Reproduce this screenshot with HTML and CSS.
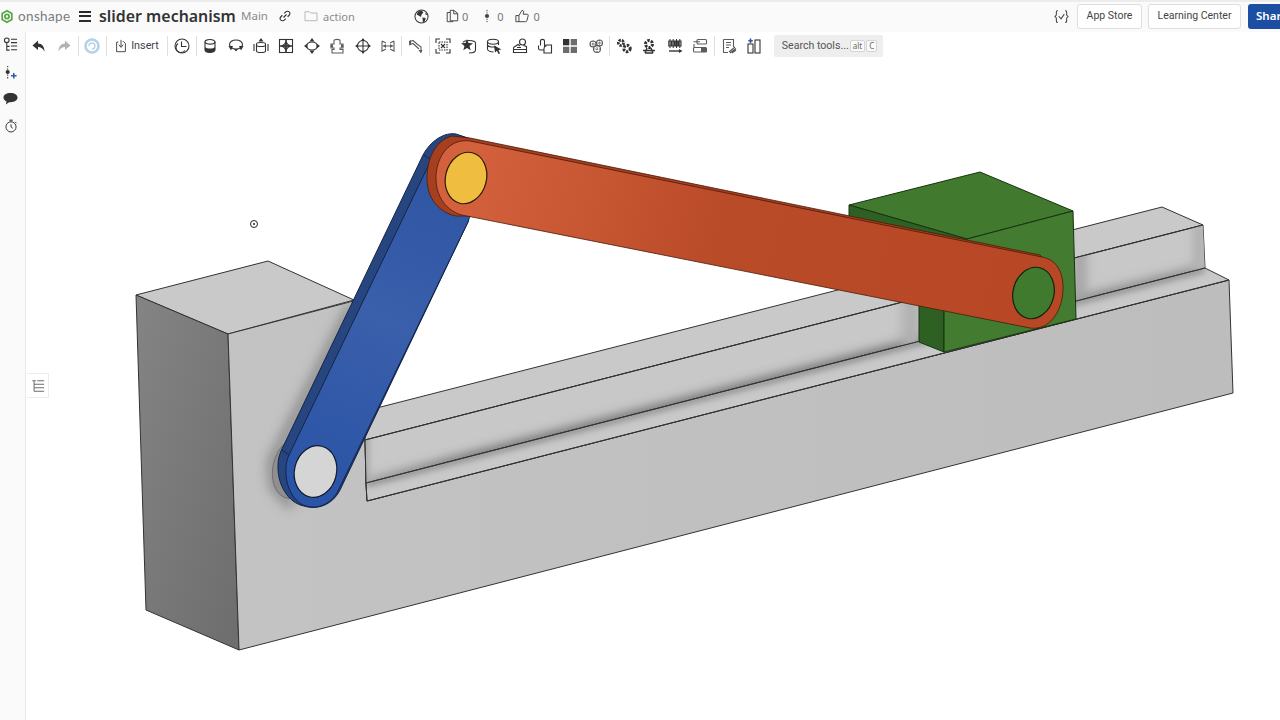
FILE: index.html
```html
<!DOCTYPE html>
<html lang="en">
<head>
<meta charset="utf-8">
<title>slider mechanism</title>
<link rel="stylesheet" href="styles.css">
</head>
<body>
<div class="app">
<svg class="scene" viewBox="0 0 1280 720" width="1280" height="720" aria-hidden="true">
  <defs>
    <linearGradient id="gLeft" x1="0" y1="0" x2="1" y2="1"><stop offset="0" stop-color="#848484"/><stop offset="1" stop-color="#6d6d6d"/></linearGradient>
    <linearGradient id="gFront" x1="0" y1="0" x2="1" y2="0"><stop offset="0" stop-color="#c3c3c3"/><stop offset="1" stop-color="#bdbdbd"/></linearGradient>
    <linearGradient id="gOrange" gradientUnits="userSpaceOnUse" x1="470" y1="150" x2="1040" y2="300"><stop offset="0" stop-color="#d4613d"/><stop offset=".45" stop-color="#ba4b28"/><stop offset="1" stop-color="#b84825"/></linearGradient>
    <linearGradient id="gBlue" gradientUnits="userSpaceOnUse" x1="440" y1="180" x2="310" y2="490"><stop offset="0" stop-color="#2f56a4"/><stop offset=".45" stop-color="#3a5fab"/><stop offset="1" stop-color="#2a54a6"/></linearGradient>
    <linearGradient id="gRailShade" gradientUnits="userSpaceOnUse" x1="366" y1="0" x2="1205" y2="0"><stop offset="0" stop-color="#888"/><stop offset=".12" stop-color="#4c4c4c"/><stop offset=".6" stop-color="#4c4c4c"/><stop offset="1" stop-color="#777"/></linearGradient>
    <filter id="blur6" filterUnits="userSpaceOnUse" x="0" y="0" width="1280" height="720"><feGaussianBlur stdDeviation="6"/></filter>
    <filter id="blur4" filterUnits="userSpaceOnUse" x="0" y="0" width="1280" height="720"><feGaussianBlur stdDeviation="3.500"/></filter>
    <clipPath id="cFront"><polygon points="228,334 365,298 365,440 366,483 367,501 1229,280 1233,393 239,650"/></clipPath>
    <clipPath id="cRailFront"><polygon points="365,440 1203,225 1205,268 366,483"/></clipPath>
    <clipPath id="cLedge"><polygon points="366,483 1205,268 1229,280 367,501"/></clipPath>
  </defs>

  <g stroke="#333" stroke-width="1" stroke-linejoin="round">
    <polygon points="136,295 268,261 354,300 228,334" fill="#c9c9c9"/>
    <polygon points="136,295 228,334 239,650 146,610" fill="url(#gLeft)"/>
    <polygon points="228,334 365,298 365,440 366,483 367,501 1229,280 1233,393 239,650" fill="url(#gFront)"/>
    <polygon points="365,411 1162,207 1203,225 365,440" fill="#c9c9c9"/>
    <polygon points="365,440 1203,225 1205,268 366,483" fill="#c8c8c8"/>
    <polygon points="366,483 1205,268 1229,280 367,501" fill="#c9c9c9"/>
  </g>

  <!-- soft ambient shadows -->
  <g clip-path="url(#cRailFront)">
    <path d="M366 485 L1205 270" stroke="url(#gRailShade)" stroke-width="8" filter="url(#blur6)" fill="none"/>
    <rect x="361" y="430" width="8" height="60" fill="#a5a5a5" filter="url(#blur4)"/>
    <rect x="1072" y="230" width="14" height="90" fill="#a2a2a2" filter="url(#blur6)"/>
    <rect x="902" y="270" width="18" height="80" fill="#b0b0b0" filter="url(#blur6)"/>
    <rect x="1192" y="220" width="14" height="50" fill="#b4b4b4" filter="url(#blur4)"/>
  </g>
  <g clip-path="url(#cLedge)">
    <path d="M366 484 L1205 269" stroke="#6c6c6c" stroke-width="4" filter="url(#blur4)" fill="none"/>
  </g>
  <g clip-path="url(#cFront)">
    <path d="M352 306 L272 462 L274 486 L292 506" stroke="#6f6f6f" stroke-width="9" fill="none" filter="url(#blur6)" opacity=".75"/>
  </g>

  <!-- edge lines restated over the shadows -->
  <g stroke="#333" stroke-width="1" fill="none">
    <path d="M365 440 L1203 225"/>
    <path d="M366 483 L1205 268"/>
    <path d="M367 501 L1229 280"/>
    <path d="M365 440 L366 483 L367 501"/>
  </g>

  <!-- slider block -->
  <g stroke="#17330f" stroke-width="1" stroke-linejoin="round">
    <polygon points="849,205 980,172 1073,211 967,239" fill="#417a2e"/>
    <polygon points="849,205 967,239 944,310 944,352 919,342 919,300 880,225 849,218" fill="#2f6023"/>
    <polygon points="967,239 1073,211 1076,319 944,352 944,310" fill="#437b30"/>
  </g>

  <!-- blue crank -->
  <ellipse cx="294" cy="468" rx="21" ry="31" fill="#8f8f8f" stroke="#6a6a6a" stroke-width=".8" transform="rotate(14 294 468)"/>
  <path d="M423 155 C431 140 445 132 456 134 L480 142 L468 222 L340 490 C332 506 316 510 304 506 C288 503 277 484 278 465 C278 460 279 456 281 451 Z" fill="#27467f" stroke="#14244a" stroke-width="1"/>
  <path d="M431 160 C437 150 446 142 458 142 L490 150 L468 222 L338 491 C330 506 316 509 306 506 C294 503 285 486 286 470 C286 464 287 459 289 455 Z" fill="url(#gBlue)" stroke="#14244a" stroke-width="1"/>
  <path d="M282 450 L289 455" stroke="#14244a" stroke-width="1" fill="none"/>
  <path d="M424 155 L431 160" stroke="#14244a" stroke-width="1" fill="none"/>
  <ellipse cx="315.500" cy="471.500" rx="21" ry="26" transform="rotate(14 315.500 471.500)" fill="#d5d5d5" stroke="#14182c" stroke-width="1.200"/>

  <!-- orange coupler -->
  <path d="M452 136 C436 140 427 158 427 178 C427 198 438 212 456 216 L470 216 L1042 257 L1040 255 L470 138 Z" fill="#a53f1f" stroke="#4a1a0a" stroke-width=".8"/>
  <path d="M470 141 C450 138 436 156 436 178 C436 200 450 214 467 216 L1030 328 C1050 331 1064 310 1063 285 C1062 268 1054 259 1042 257 Z" fill="url(#gOrange)" stroke="#4a1a0a" stroke-width=".8"/>
  <ellipse cx="466" cy="178" rx="20.500" ry="26" transform="rotate(14 466 178)" fill="#efbd40" stroke="#2b1a08" stroke-width="1.200"/>
  <ellipse cx="1033.500" cy="293" rx="20.500" ry="26" transform="rotate(14 1033.500 293)" fill="#3f7a2e" stroke="#10240c" stroke-width="1.200"/>

  <!-- view target -->
  <circle cx="254" cy="224" r="3.500" fill="#fff" stroke="#222" stroke-width="1"/>
  <circle cx="254" cy="224" r="1" fill="#222"/>
</svg>

<header class="topbar">
  <svg class="ico logo" viewBox="0 0 16 16"><path d="M8 1.500 L13.500 4.700 V11.300 L8 14.500 L2.500 11.300 V4.700 Z"/><circle cx="8" cy="8" r="2.400"/></svg>
  <span class="brand">onshape</span>
  <span class="burger"><i></i><i></i><i></i></span>
  <h1 class="doc-title">slider mechanism</h1>
  <span class="branch">Main</span>
  <svg class="ico link-ico" viewBox="0 0 16 16"><path d="M6 10 L10 6 M7 4.500 L9 2.500 C10.500 1.200 13 1.500 14 3 C14.800 4.300 14.500 6 13.500 7 L11.500 9 M9 11.500 L7 13.500 C5.500 14.800 3 14.500 2 13 C1.200 11.700 1.500 10 2.500 9 L4.500 7"/></svg>
  <svg class="ico folder-ico" viewBox="0 0 16 14"><path d="M1 12.500 V2 H6 L7.500 3.500 H15 V12.500 Z"/></svg>
  <span class="folder-name">action</span>
  <svg class="ico globe-ico" viewBox="0 0 16 16"><circle cx="8" cy="8" r="7"/><path class="f" d="M4 3 L8 1.500 L10 3.500 L8 6 L7.500 8.500 L5 7 L3 6 Z M9 9 L12.500 9.500 L11.500 13 L9.500 14 Z M12 3.500 L14.500 6 L12.500 6.500 Z"/></svg>
  <span class="stat stat-docs"><svg class="ico" viewBox="0 0 16 16"><path d="M6 3.500 V1.500 H10 L14.500 5 V13.500 H6 Z M6 4 H2.500 V14.500 H9 V13.500 M10 1.500 V5.500 H14.500"/></svg><b>0</b></span>
  <span class="stat stat-rev"><svg class="ico" viewBox="0 0 16 16"><path d="M8 1 V5 M8 11 V15" stroke-dasharray="1.500 1.200"/><circle class="f" cx="8" cy="8" r="2.400"/></svg><b>0</b></span>
  <span class="stat stat-like"><svg class="ico" viewBox="0 0 16 16"><path d="M1 7.500 H4.500 V14.500 H1 Z M4.500 7.500 L8 1.500 C9.800 1.500 10.300 3 9.800 4.500 L9.300 6 H14 C15 6 15.300 7 15 8 L13.500 13.500 C13.300 14.200 12.800 14.500 12 14.500 H4.500"/></svg><b>0</b></span>
  <span class="spacer"></span>
  <svg class="ico vars-ico" viewBox="0 0 16 16"><path d="M4 1.500 C2.500 1.500 2.500 2.500 2.500 4 V6.500 L1 8 L2.500 9.500 V12 C2.500 13.500 2.500 14.500 4 14.500 M12 1.500 C13.500 1.500 13.500 2.500 13.500 4 V6.500 L15 8 L13.500 9.500 V12 C13.500 13.500 13.500 14.500 12 14.500 M5 7.500 L7.500 10.500 L11 5.500"/></svg>
  <button class="btn btn-app">App Store</button>
  <button class="btn btn-learn">Learning Center</button>
  <button class="btn-share">Share</button>
</header>

<div class="workspace">
  <nav class="rail">
    <svg class="ico r1" viewBox="0 0 16 16"><circle cx="4" cy="3.500" r="2.500"/><path d="M4 6 V14 H7 M4 10 H7 M8.500 2.500 H15 M8.500 6 H15 M8.500 9.500 H15 M8.500 13.500 H15"/></svg>
    <svg class="ico r2" viewBox="0 0 16 16"><path d="M5 1 V5 M5 10 V15" stroke-dasharray="1.500 1.300"/><circle class="f" cx="5" cy="7.500" r="2.200"/><path class="blue" d="M11.500 8.500 V14.500 M8.500 11.500 H14.500" stroke-width="1.600"/></svg>
    <svg class="ico r3" viewBox="0 0 16 16"><path class="f" d="M8 2 C12.500 2 15.500 4.200 15.500 7 C15.500 9.800 12.500 12 8 12 L6.500 12 L3 14.500 L3.800 11.300 C1.800 10.400 .5 8.800 .5 7 C.5 4.200 3.500 2 8 2 Z"/></svg>
    <svg class="ico r4" viewBox="0 0 16 16"><circle cx="8" cy="9" r="5.800"/><path d="M6 1.300 H10 M8 1.300 V3 M8 6 V9 L10 10.500 M13 3.500 L14.300 4.800"/></svg>
  </nav>
  <div class="stage">
    <div class="toolbar">
      <button class="tool"><svg class="ico" viewBox="0 0 16 16"><path class="f" d="M7 2.500 L1.500 7.500 L7 12 V9 C10 9 12 10.500 13.500 13.500 C13.500 8.500 11 5.500 7 5.500 Z"/></svg></button>
      <button class="tool dim"><svg class="ico" viewBox="0 0 16 16"><path class="f" d="M9 2.500 L14.500 7.500 L9 12 V9 C6 9 4 10.500 2.500 13.500 C2.500 8.500 5 5.500 9 5.500 Z"/></svg></button>
      <i class="sep"></i>
      <button class="tool"><svg class="ico update" viewBox="0 0 16 16"><circle cx="8" cy="8" r="6.500" stroke-width="2.600"/><path d="M5 8 A3 3 0 1 1 8 11" stroke-width="1.400"/></svg></button>
      <i class="sep"></i>
      <button class="insert"><svg class="ico" viewBox="0 0 16 16"><path d="M5 3.500 H3 V14.500 H13 V5 L11 3 H10 M8 1 V9 M5.500 6.500 L8 9.500 L10.500 6.500"/></svg><span>Insert</span></button>
      <i class="sep"></i>
      <button class="tool"><svg class="ico" viewBox="0 0 16 16"><circle cx="8" cy="8" r="7"/><path d="M7.500 3.500 V8.500 H12.500 M4 5.500 A5 5 0 1 0 11 12.500"/></svg></button>
      <i class="sep"></i>
      <button class="tool"><svg class="ico" viewBox="0 0 16 16"><ellipse cx="8" cy="3.800" rx="5" ry="2.300"/><path d="M3 3.800 V12 C3 15.300 13 15.300 13 12 V3.800"/><path class="f" d="M3 9 C5 11 11 11 13 9 V12 C13 15.300 3 15.300 3 12 Z"/></svg></button>
      <button class="tool"><svg class="ico" viewBox="0 0 16 16"><ellipse cx="8" cy="6.500" rx="6.500" ry="4.500"/><path class="f" d="M.5 8 L5 8 L3 12.500 Z M15.500 8 L11 8 L13 12.500 Z M6 11 L10 11 L8 13.500 Z"/></svg></button>
      <button class="tool"><svg class="ico" viewBox="0 0 16 16"><path d="M3.500 6 C3.500 4 12.500 4 12.500 6 V13 C12.500 15 3.500 15 3.500 13 Z M3.500 7 C3.500 9 12.500 9 12.500 7 M1 6 V13 M15 6 V13"/><path class="f" d="M8 0 L10.500 3.500 H5.500 Z"/></svg></button>
      <button class="tool"><svg class="ico" viewBox="0 0 16 16"><rect x="1.500" y="1.500" width="13" height="13"/><path d="M8 1 V15 M1 8 H15" stroke-width="1.600"/><path class="f" d="M8 3 L10.500 6.500 H5.500 Z M8 13 L5.500 9.500 H10.500 Z M3 8 L6.500 5.500 V10.500 Z M13 8 L9.500 10.500 V5.500 Z"/></svg></button>
      <button class="tool"><svg class="ico" viewBox="0 0 16 16"><ellipse cx="8" cy="8" rx="5.500" ry="4"/><path class="f" d="M8 0 L10.500 3.500 H5.500 Z M8 16 L5.500 12.500 H10.500 Z M0 8 L3.500 5.500 V10.500 Z M16 8 L12.500 10.500 V5.500 Z"/></svg></button>
      <button class="tool soft"><svg class="ico" viewBox="0 0 16 16"><path d="M5 2.500 C5 1 11 1 11 2.500 V6 H14 V10 H11 V11.500 H14 V15 H3 V11.500 H5 V10 H2 V6 H5 Z"/><path class="f" d="M1 8 L4 6 V10 Z M15 8 L12 10 V6 Z"/></svg></button>
      <button class="tool"><svg class="ico" viewBox="0 0 16 16"><circle cx="8" cy="8" r="5.500"/><path d="M8 1 V15 M1 8 H15"/><path class="f" d="M8 0 L10 3 H6 Z M8 16 L6 13 H10 Z M0 8 L3 6 V10 Z M16 8 L13 10 V6 Z"/></svg></button>
      <button class="tool soft"><svg class="ico" viewBox="0 0 16 16"><path d="M2 3 V13 L6 11 M14 3 V13 L10 11 M2 3 L6 5 M14 3 L10 5 M3 8 H13"/><path class="f" d="M3 8 L6 6 V10 Z M13 8 L10 10 V6 Z"/></svg></button>
      <i class="sep tight"></i>
      <button class="tool soft"><svg class="ico" viewBox="0 0 16 16"><path d="M2 4 L6 2.500 L10 6 L14 9 V14 M2 7 L6 5.500 L12 11"/><path class="f" d="M14 15.500 L11.500 12 H15.500 Z M2 3 L4 2 V6 L2 6.500 Z"/></svg></button>
      <i class="sep"></i>
      <button class="tool"><svg class="ico" viewBox="0 0 16 16"><path d="M1 5 V1 H5 M11 1 H15 V5 M15 11 V15 H11 M5 15 H1 V11"/><rect x="4" y="4" width="8" height="8" stroke-dasharray="1.500 1"/><path d="M6 6 L10 10 M10 6 L6 10"/></svg></button>
      <button class="tool"><svg class="ico" viewBox="0 0 16 16"><path d="M8 2.500 C12 2.500 14.500 3.500 14.500 5 V12 C14.500 14 11 15 8 15 M8 2.500 C5 2.500 3 3 2 4.500"/><path class="f" d="M6 1 L7.500 5 L12 5.300 L8.500 8 L9.700 12.300 L6 10 L2.300 12.300 L3.500 8 L0 5.300 L4.500 5 Z"/></svg></button>
      <button class="tool"><svg class="ico" viewBox="0 0 16 16"><ellipse cx="7" cy="3.800" rx="5.500" ry="2.500"/><path d="M1.500 3.800 V11 C1.500 13 5 14 7.500 14 M12.500 3.800 V7 M1.500 7.500 C3 9 7 9.500 10 8.500"/><path class="f" d="M8 7.500 L15.500 11.500 L12.500 12 L14 15.500 L12.500 16 L11 12.800 L9 14.500 Z"/></svg></button>
      <button class="tool"><svg class="ico" viewBox="0 0 16 16"><circle cx="10.500" cy="4" r="3"/><path d="M1.500 9.500 L6 6.500 L8 8 M1.500 9.500 V14.500 H14.500 V8.500 L11.500 7.500 M1.500 11.500 H14.500 M5 9.500 H9"/></svg></button>
      <button class="tool"><svg class="ico" viewBox="0 0 16 16"><path d="M3.500 7.500 V3 C3.500 .8 7.500 .8 7.500 3 V8 H9.500 M1.500 7.500 V10.500 C1.500 11.500 2.500 12 3.500 12 H7 M9 7 H14.500 V15 H7 V10.500 C7 9 9 7.500 9 7 Z"/></svg></button>
      <button class="tool"><svg class="ico dark" viewBox="0 0 16 16"><path class="f" d="M1 1 H7.300 V7.300 H1 Z"/><path class="f dimf" d="M8.700 1 H15 V7.300 H8.700 Z M1 8.700 H7.300 V15 H1 Z M8.700 8.700 H15 V15 H8.700 Z"/></svg></button>
      <button class="tool soft"><svg class="ico" viewBox="0 0 16 16"><circle cx="5" cy="6" r="3"/><circle cx="11.500" cy="5" r="3"/><circle cx="9" cy="11" r="3.500"/><path d="M5 3 V9 M2 6 H8 M11.500 2 V8 M8.500 5 H14.500 M9 7.500 V14.500 M5.500 11 H12.500" stroke-dasharray="1 .8"/></svg></button>
      <i class="sep"></i>
      <button class="tool"><svg class="ico" viewBox="0 0 16 16"><circle cx="5" cy="4.800" r="2.600" stroke-width="2.800" stroke-dasharray="2.200 1"/><circle cx="11" cy="10.500" r="3.200" stroke-width="3" stroke-dasharray="2.400 1.200"/></svg></button>
      <button class="tool"><svg class="ico" viewBox="0 0 16 16"><circle cx="8" cy="6" r="3.500" stroke-width="3" stroke-dasharray="2.400 1.200"/><path d="M2 12.500 H14 M4 15 H12 M4 15 L6 10 M12 15 L10 10" stroke-width="1.400"/></svg></button>
      <button class="tool"><svg class="ico" viewBox="0 0 16 16"><path d="M3 1 V10 M6.200 1 V10 M9.500 1 V10 M12.800 1 V10" stroke-width="1"/><path d="M1.800 3 H4.200 V8 H1.800 Z M5 3 H7.400 V8 H5 Z M8.300 3 H10.700 V8 H8.300 Z M11.600 3 H14 V8 H11.600 Z"/><path d="M2 13 H13" stroke-width="1.400"/><path class="f" d="M15.500 13 L12 11 V15 Z"/></svg></button>
      <button class="tool soft"><svg class="ico" viewBox="0 0 16 16"><rect x="5" y="1.500" width="9.500" height="4.500" rx="1"/><rect x="1.500" y="9.500" width="13" height="4.500" rx="1"/><path d="M1.500 3.800 H8 M2 6 V9.500"/><path class="f" d="M9 10 H15 V14 H9 Z"/></svg></button>
      <i class="sep"></i>
      <button class="tool soft"><svg class="ico" viewBox="0 0 16 16"><path d="M2.500 1.500 H12.500 V9 M2.500 1.500 V14.500 H7 M5 4.500 H10 M5 7 H10 M5 9.500 H8"/><path class="blue-dark" d="M8 14 L14 9 M9 15 L15 10.500 M11 15 L15 12" /></svg></button>
      <button class="tool"><svg class="ico" viewBox="0 0 16 16"><rect x="2" y="6" width="5" height="9"/><rect x="9" y="2" width="5" height="13"/><path class="blue" d="M4.500 .5 V5 M2.300 2.800 H6.800" stroke-width="1.600"/></svg></button>
      <div class="search"><span>Search tools...</span><kbd>alt</kbd><kbd>C</kbd></div>
    </div>
    <button class="list-toggle"><svg class="ico" viewBox="0 0 16 16"><path d="M1.500 2 H5.500 M3.500 2 V14 M3.500 6 H7 M3.500 10 H7 M3.500 14 H7 M7 2 H15 M7 6 H15 M7 10 H15 M7 14 H15"/></svg></button>
  </div>
</div>
</div>
</body>
</html>
```
FILE: styles.css
```css
* { box-sizing: border-box; }
html, body { margin: 0; padding: 0; }
body { width: 1280px; height: 720px; overflow: hidden; background: #fff; font-family: "Noto Sans", "Open Sans", sans-serif; color: #333; }
.app { position: relative; width: 1280px; height: 720px; overflow: hidden; }
.scene { position: absolute; left: 0; top: 0; display: block; }

.ico { display: block; width: 16px; height: 16px; fill: none; stroke: currentColor; stroke-width: 1.1; flex: none; }
.ico .f { fill: currentColor; stroke: none; }
.ico .blue { stroke: #2c5aa8; }
.ico .blue-dark { stroke: #555; }
.ico .dimf { opacity: .72; }

.topbar { position: relative; height: 32px; display: flex; align-items: center; background: #fafafa; border-top: 2px solid #ececec; padding-bottom: 2px; overflow: hidden; }
.logo { color: #5aa64a; width: 14px; height: 15px; stroke-width: 2; }
.brand { margin-left: 4px; font: 400 13.500px/16px "Lato", sans-serif; letter-spacing: .35px; color: #7c7c7c; width: 61px; }
.burger { display: flex; flex-direction: column; gap: 2.500px; width: 12px; }
.burger i { display: block; height: 2px; background: #2a2a2a; }
.doc-title { margin: 0 0 0 8px; font: 600 15.900px/20px "Noto Sans", sans-serif; color: #333; white-space: nowrap; width: 142px; }
.branch { font: 400 11.500px/16px "Noto Sans", sans-serif; color: #8a8a8a; width: 38px; }
.link-ico { width: 12px; height: 12px; color: #333; stroke-width: 1.500; }
.folder-ico { width: 14px; height: 12px; margin-left: 13px; color: #b5b5b5; }
.folder-name { margin-left: 5px; font-size: 11px; color: #8a8a8a; width: 91px; }
.globe-ico { width: 15px; height: 15px; color: #333; }
.stat { display: flex; align-items: center; gap: 4px; color: #444; }
.stat b { font-weight: 400; font-size: 11px; color: #777; }
.stat .ico { width: 14px; height: 14px; }
.stat-docs { margin-left: 16px; gap: 3px; }
.stat-rev { margin-left: 12px; gap: 3px; }
.stat-like { margin-left: 11px; gap: 5px; }
.spacer { flex: 1; }
.vars-ico { width: 15px; height: 15px; color: #444; margin-right: 8px; }
.btn { font: 400 10.500px/1 "Roboto", sans-serif; color: #444; background: #fff; border: 1px solid #dedede; border-radius: 3px; height: 25px; padding: 0; }
.btn-app { width: 65px; margin-right: 6px; }
.btn-learn { width: 93px; margin-right: 7px; }
.btn-share { flex: none; width: 44px; height: 25px; margin-right: -12px; font: 600 11.500px/1 "Noto Sans", sans-serif; color: #fff; background: #1c4fa1; border: 0; border-radius: 3px 0 0 3px; text-align: left; padding: 0 0 0 8px; }

.workspace { position: relative; display: flex; height: 688px; }
.rail { flex: none; width: 26px; height: 688px; background: #fafafa; border-right: 1px solid #e8e8e8; display: flex; flex-direction: column; align-items: center; padding: 5px 4px 0 0; color: #333; }
.rail .ico { width: 15px; height: 15px; }
.rail .r2 { margin-top: 13px; }
.rail .r3 { margin-top: 11px; }
.rail .r4 { margin-top: 13px; width: 14px; height: 14px; }

.stage { flex: 1; position: relative; }
.toolbar { display: flex; align-items: center; height: 28px; }
.tool { flex: none; width: 25.400px; height: 22px; padding: 0; border: 0; background: transparent; color: #333; display: flex; align-items: center; justify-content: center; }
.tool .ico { width: 16px; height: 16px; }
.tool.dim { color: #b3b3b3; }
.tool.soft { color: #5c5c5c; }
.update { color: #b4d2e9; }
.sep { flex: none; display: block; width: 1px; height: 20px; background: #dfdfdf; margin: 0 1px; }
.sep.tight { margin: 0 0 0 .6px; }
.insert { flex: none; width: 58px; height: 22px; padding: 0 0 0 6px; border: 0; background: transparent; display: flex; align-items: center; gap: 3px; color: #444; font: 400 10.800px/1 "Roboto", sans-serif; }
.insert .ico { width: 14px; height: 14px; }
.search { flex: none; margin-left: 7px; width: 109px; height: 22px; background: #eee; border-radius: 2px; display: flex; align-items: center; padding-left: 8px; font: 400 10.600px/1 "Roboto", sans-serif; color: #555; white-space: nowrap; }
.search span { width: 68px; }
.search kbd { font: 400 8px/10px "Noto Sans", sans-serif; color: #666; background: #fafafa; border: 1px solid #d5d5d5; border-radius: 2px; height: 12px; padding: 0 2px; margin-right: 1px; }
.list-toggle { position: absolute; left: 1px; top: 341px; width: 22px; height: 25px; padding: 0; background: #fff; border: 1px solid #ececec; border-left: 0; display: flex; align-items: center; justify-content: center; color: #666; }
.list-toggle .ico { width: 14px; height: 14px; }
```
